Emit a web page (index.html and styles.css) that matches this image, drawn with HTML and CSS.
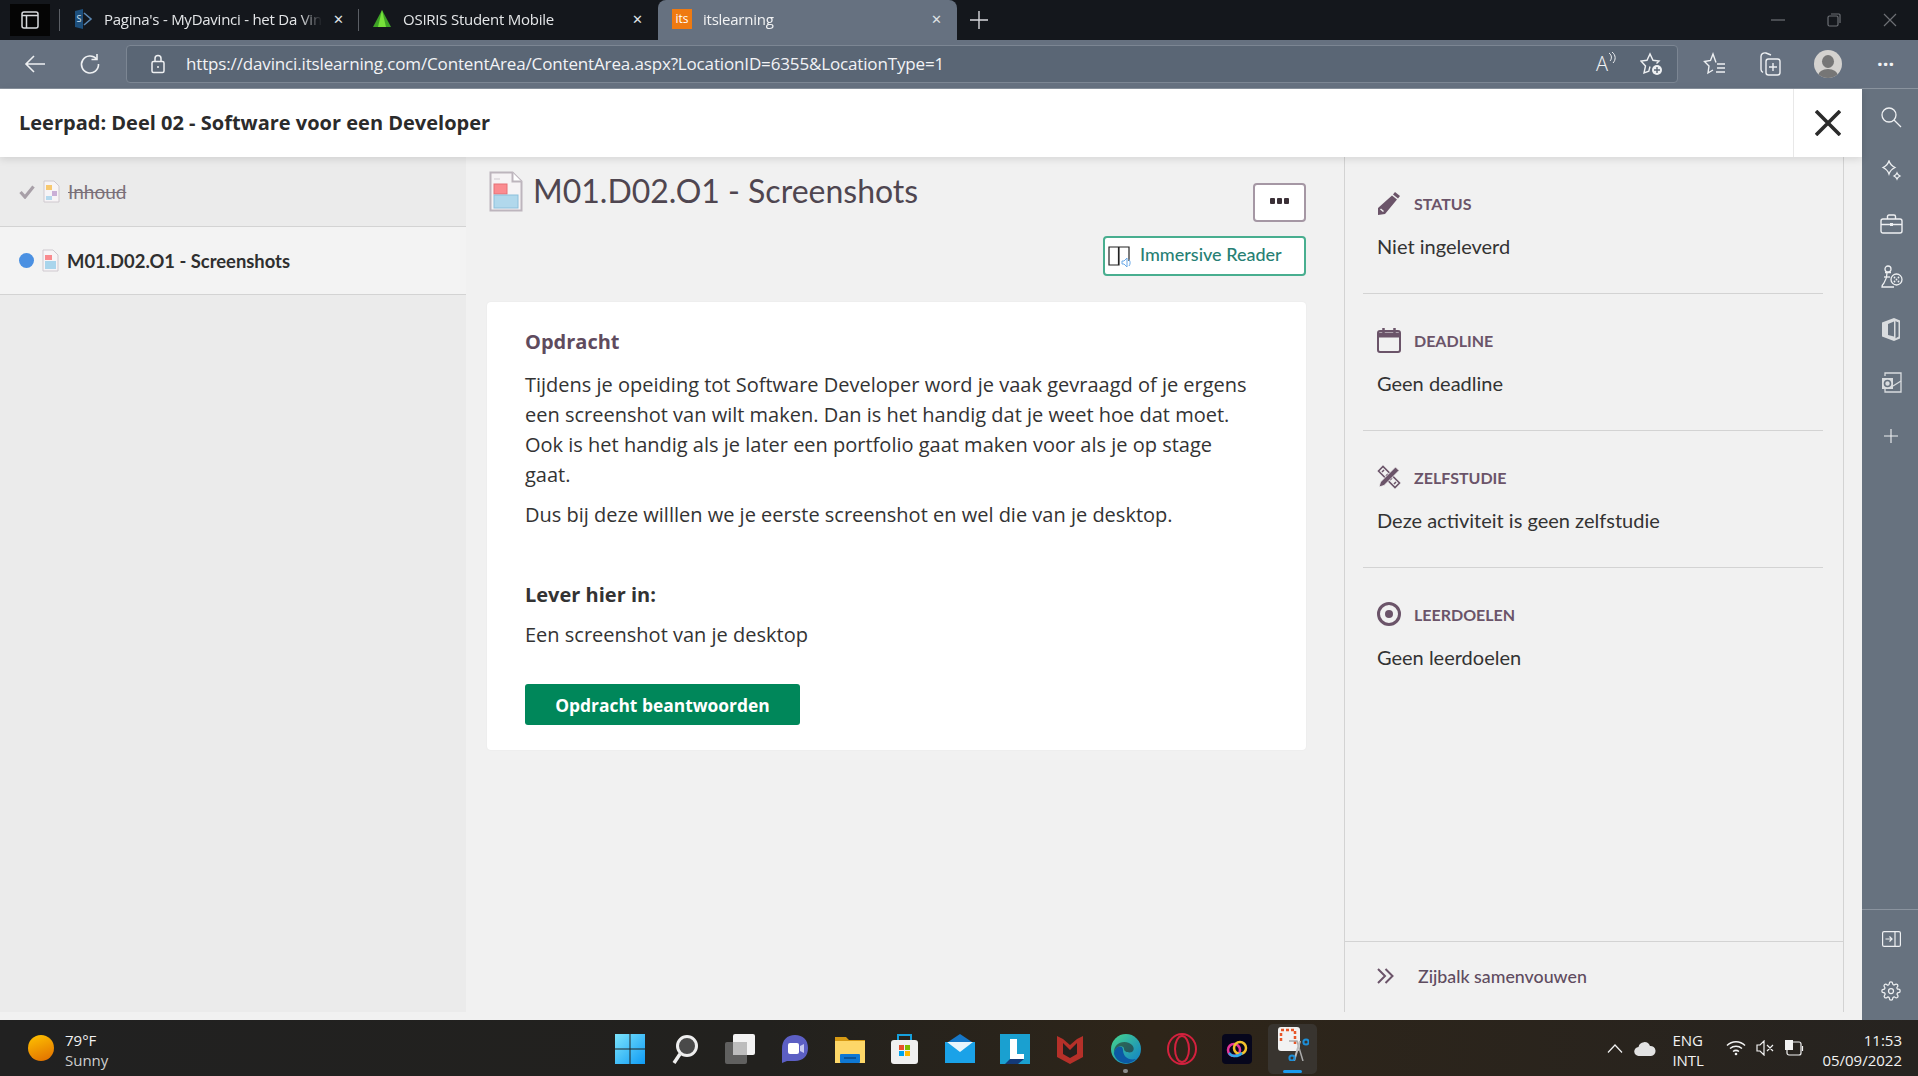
FILE: index.html
```html
<!DOCTYPE html>
<html lang="en">
<head>
    <meta charset="UTF-8">
    <title>itslearning</title>
    <link rel="stylesheet" href="styles.css">
</head>
<body>

<!-- Browser tabs -->
<div class="tabbar">
    <div class="tab-toggle">
        <svg width="18" height="18" viewBox="0 0 18 18" fill="none" stroke="#d8dadd" stroke-width="1.5"><rect x="1" y="1" width="16" height="16" rx="2"/><path d="M1 4.5h16M5.5 4.5V17"/></svg>
    </div>
    <div class="tab">
        <svg width="20" height="22" viewBox="0 0 20 22"><path d="M2 3l8-2v20l-8-2z" fill="#1d4f7c"/><path d="M11 5l7 6-7 6" fill="none" stroke="#5b87b2" stroke-width="1.6"/><text x="3.5" y="14" font-size="9" fill="#cfe0ee" font-family="Open Sans">S</text></svg>
        <span class="tab-label">Pagina's - MyDavinci - het Da Vinci</span>
        <span class="tab-close">✕</span>
    </div>
    <div class="tab">
        <svg width="20" height="20" viewBox="0 0 20 20"><path d="M10 1L19 18H1z" fill="#3fa326"/><path d="M10 1l-4 17h8z" fill="#77e23a"/></svg>
        <span class="tab-label">OSIRIS Student Mobile</span>
        <span class="tab-close">✕</span>
    </div>
    <div class="tab tab-active">
        <span class="its-logo">its</span>
        <span class="tab-label">itslearning</span>
        <span class="tab-close">✕</span>
    </div>
    <div class="tab-new">
        <svg width="18" height="18" viewBox="0 0 18 18" stroke="#d6d8db" stroke-width="1.4"><path d="M9 0v18M0 9h18"/></svg>
    </div>
    <div class="window-controls">
        <svg width="14" height="14" viewBox="0 0 14 14" stroke="#6d7075" stroke-width="1.2"><path d="M0 7h14"/></svg>
        <svg width="14" height="14" viewBox="0 0 14 14" fill="none" stroke="#6d7075" stroke-width="1.2"><rect x="1" y="3" width="10" height="10" rx="1.5"/><path d="M4 1h8a1 1 0 0 1 1 1v8"/></svg>
        <svg width="14" height="14" viewBox="0 0 14 14" stroke="#6d7075" stroke-width="1.2"><path d="M1 1l12 12M13 1L1 13"/></svg>
    </div>
</div>

<!-- Address bar -->
<div class="toolbar">
    <svg class="tb-back" width="22" height="20" viewBox="0 0 22 20" fill="none" stroke="#eef0f2" stroke-width="1.6"><path d="M21 10H2M10 2l-8 8 8 8"/></svg>
    <svg class="tb-reload" width="22" height="22" viewBox="0 0 22 22" fill="none" stroke="#eef0f2" stroke-width="1.6"><path d="M17.5 6A8.5 8.5 0 1 0 19.5 11"/><path d="M18 1v5.5h-5.5"/></svg>
    <div class="addressbar">
        <svg width="16" height="20" viewBox="0 0 16 20" fill="none" stroke="#eef0f2" stroke-width="1.5"><rect x="2" y="7.500" width="12" height="11" rx="1.5"/><path d="M5 7.500V4.500a3 3 0 0 1 6 0v3"/><circle cx="8" cy="13" r="1" fill="#eef0f2" stroke="none"/></svg>
        <span class="url">https://davinci.itslearning.com/ContentArea/ContentArea.aspx?LocationID=6355&amp;LocationType=1</span>
        <span class="read-aloud">A<svg width="8" height="14" viewBox="0 0 8 14" fill="none" stroke="#eef0f2" stroke-width="1"><path d="M1 1c3 2 3 6 1 8M4 0c4 3 4 8 1 11"/></svg></span>
        <svg class="addr-fav" width="24" height="24" viewBox="0 0 24 24" fill="none" stroke="#eef0f2" stroke-width="1.4"><path d="M10 14.500l-1.200 4.700L4 21l1.500-7L1 9l6-.7L10 2l3 6.300 6 .7-2.500 2.500"/><circle cx="17" cy="18" r="5" fill="#eef0f2" stroke="none"/><path d="M17 15v6M14 18h6" stroke="#5a6675"/></svg>
    </div>
    <svg class="tb-star" width="24" height="24" viewBox="0 0 24 24" fill="none" stroke="#eef0f2" stroke-width="1.4"><path d="M13 10.500L10 2 7.500 8.500 1.500 9.500l4.500 4.500L5 21l5-3"/><path d="M14 12h8M14 16h8M13 20h9"/></svg>
    <svg class="tb-collect" width="24" height="26" viewBox="0 0 24 26" fill="none" stroke="#eef0f2" stroke-width="1.4"><rect x="8" y="8" width="14" height="16" rx="2.5"/><path d="M13 4l-5-2C5 1.500 3 3 3 5.500v13c0 1 .5 2 2 3M15 12v8M11 16h8"/></svg>
    <span class="avatar"><span class="avatar-head"></span><span class="avatar-body"></span></span>
    <span class="tb-dots">···</span>
</div>

<div class="workspace">
    <div class="app">
        <!-- Learning path header -->
        <header class="path-header">
            <h1>Leerpad: Deel 02 - Software voor een Developer</h1>
            <div class="path-close">
                <svg width="26" height="26" viewBox="0 0 26 26" stroke="#2b2b2b" stroke-width="3.6"><path d="M1 1l24 24M25 1L1 25"/></svg>
            </div>
        </header>

        <div class="columns">
            <!-- Left list -->
            <nav class="path-list">
                <div class="path-item path-item-done">
                    <svg class="check" width="16" height="14" viewBox="0 0 16 14" fill="none" stroke="#a8a0a8" stroke-width="3.2"><path d="M1.500 7l4.500 5L14.500 1.500"/></svg>
                    <svg width="17" height="23" viewBox="0 0 17 23"><path d="M1 1h10l5 5v16H1z" fill="#f7f4f6" stroke="#cfc9cf"/><rect x="3" y="5" width="6" height="5" fill="#f7c870"/><rect x="9" y="11" width="5" height="5" fill="#c9aed6"/><rect x="3" y="16" width="6" height="4" fill="#b5d9ee"/></svg>
                    <span class="item-done">Inhoud</span>
                </div>
                <div class="path-item path-item-current">
                    <span class="dot"></span>
                    <svg width="17" height="23" viewBox="0 0 17 23"><path d="M1 1h10l5 5v16H1z" fill="#f7f4f6" stroke="#cfc9cf"/><rect x="3" y="6" width="7" height="5" fill="#f98a8e"/><rect x="3" y="12" width="11" height="8" fill="#a9d5ec"/></svg>
                    <span class="item-current">M01.D02.O1 - Screenshots</span>
                </div>
            </nav>

            <!-- Assignment -->
            <main class="content">
                <div class="content-head">
                    <div class="title-row">
                        <svg width="34" height="41" viewBox="0 0 34 41"><path d="M1.500 1.500h22l9 9v29h-31z" fill="#f6f3f5" stroke="#bdb5bd" stroke-width="2"/><path d="M23.500 1.500v9h9" fill="#fff" stroke="#bdb5bd" stroke-width="2"/><path d="M5 8h6" stroke="#cfc9cf"/><rect x="5" y="13" width="13" height="10" fill="#fb8b90" stroke="#e57176"/><rect x="5" y="24" width="24" height="13" fill="#b1d8ec" stroke="#8cc0dc"/></svg>
                        <h2>M01.D02.O1 - Screenshots</h2>
                    </div>
                    <div class="head-actions">
                        <button class="btn-more"><i></i><i></i><i></i></button>
                        <button class="btn-reader">
                            <svg width="24" height="24" viewBox="0 0 24 24" fill="none"><path d="M10.500 3H1v18h10V3h10v14M10.500 3v18" stroke="#222" stroke-width="1.200"/><path d="M14 17h2l3-3v9l-3-3h-2zM21 15.500c1.500 2 1.500 4.500 0 6.500" stroke="#6aa9e8" stroke-width="1" fill="#fff"/></svg>
                            <span>Immersive Reader</span>
                        </button>
                    </div>
                </div>

                <section class="card">
                    <h3>Opdracht</h3>
                    <p>Tijdens je opeiding tot Software Developer word je vaak gevraagd of je ergens een screenshot van wilt maken. Dan is het handig dat je weet hoe dat moet. Ook is het handig als je later een portfolio gaat maken voor als je op stage gaat.</p>
                    <p>Dus bij deze willlen we je eerste screenshot en wel die van je desktop.</p>
                    <h4>Lever hier in:</h4>
                    <p>Een screenshot van je desktop</p>
                    <button class="btn-answer">Opdracht beantwoorden</button>
                </section>
            </main>

            <!-- Info sidebar -->
            <aside class="info">
                <div class="info-list">
                    <div class="info-block">
                        <div class="info-label">
                            <svg width="24" height="24" viewBox="0 0 24 24" fill="#6b5469"><path d="M18 1l5 4-2 2.500-5-4zM15 4.500l5 4L8 23l-7 1 0-7z"/><path d="M3.500 18l3 2.500" stroke="#f1f1f1" stroke-width="1.500"/></svg>
                            <span>STATUS</span>
                        </div>
                        <div class="info-value">Niet ingeleverd</div>
                    </div>
                    <div class="info-block">
                        <div class="info-label">
                            <svg width="24" height="26" viewBox="0 0 24 26" fill="none" stroke="#6b5469" stroke-width="2"><rect x="1" y="4" width="22" height="21" rx="2"/><path d="M1 8h22" stroke-width="5"/><path d="M6.500 1v6M17.500 1v6" stroke-width="2.500"/></svg>
                            <span>DEADLINE</span>
                        </div>
                        <div class="info-value">Geen deadline</div>
                    </div>
                    <div class="info-block">
                        <div class="info-label">
                            <svg width="24" height="24" viewBox="0 0 24 24" fill="none" stroke="#6b5469" stroke-width="1.600"><path d="M1.500 6L6 1.500 22.500 18 18 22.500z" fill="#f1f1f1"/><path d="M5 7l2-2M9 11l2-2M13 15l2-2M17 19l2-2"/><path d="M18.500 2l3.500 3.500L7 20.500l-5 1.500 1.500-5z" fill="#6b5469" stroke="#f1f1f1" stroke-width=".8"/></svg>
                            <span>ZELFSTUDIE</span>
                        </div>
                        <div class="info-value">Deze activiteit is geen zelfstudie</div>
                    </div>
                    <div class="info-block info-block-last">
                        <div class="info-label">
                            <svg width="24" height="24" viewBox="0 0 24 24"><circle cx="12" cy="12" r="10.500" fill="none" stroke="#6b5469" stroke-width="3"/><circle cx="12" cy="12" r="4" fill="#6b5469"/></svg>
                            <span>LEERDOELEN</span>
                        </div>
                        <div class="info-value">Geen leerdoelen</div>
                    </div>
                </div>
                <div class="info-foot">
                    <svg width="18" height="18" viewBox="0 0 18 18" fill="none" stroke="#6b5469" stroke-width="2"><path d="M1 2l7 7-7 7M8.500 2l7 7-7 7"/></svg>
                    <span>Zijbalk samenvouwen</span>
                </div>
            </aside>
            <div class="gutter"></div>
        </div>
    </div>

    <!-- Edge sidebar -->
    <div class="rail">
        <div class="rail-top">
            <svg width="21" height="21" viewBox="0 0 21 21" fill="none" stroke="#eef0f2" stroke-width="1.3"><circle cx="8" cy="8" r="7"/><path d="M13 13l7 7"/></svg>
            <svg width="21" height="21" viewBox="0 0 21 21" fill="none" stroke="#eef0f2" stroke-width="1.3"><path d="M8 1c1 3 3 5 6 6.500-3 1.500-5 3.500-6 6.500-1-3-3-5-6-6.500C5 6 7 4 8 1z"/><path d="M16 13c.5 1.300 1.200 2 3 3-1.800 1-2.500 1.700-3 3-.5-1.300-1.200-2-3-3 1.800-1 2.500-1.700 3-3z"/></svg>
            <svg width="23" height="20" viewBox="0 0 23 20" fill="none" stroke="#eef0f2" stroke-width="1.400"><rect x="1" y="5" width="21" height="14" rx="2"/><path d="M7.500 5V2.500C7.500 1.500 8 1 9 1h5c1 0 1.500.5 1.500 1.500V5M1 10.500h21"/><rect x="10" y="9" width="3" height="3" fill="#eef0f2" stroke="none"/></svg>
            <svg width="23" height="23" viewBox="0 0 23 23" fill="none" stroke="#eef0f2" stroke-width="1.300"><circle cx="8" cy="4" r="3"/><path d="M5 7.500h6M7 8c0 4-1 7-3 10-1 1-2 2-2 4h12"/><path d="M4 12h6"/><circle cx="16.500" cy="14.500" r="5.500" fill="#67727f"/><circle cx="16.500" cy="14.500" r=".9" fill="#eef0f2" stroke="none"/><circle cx="14.500" cy="12.500" r=".9" fill="#eef0f2" stroke="none"/><circle cx="18.500" cy="12.500" r=".9" fill="#eef0f2" stroke="none"/><circle cx="14.500" cy="16.500" r=".9" fill="#eef0f2" stroke="none"/><circle cx="18.500" cy="16.500" r=".9" fill="#eef0f2" stroke="none"/></svg>
            <svg width="20" height="25" viewBox="0 0 20 25"><path d="M1 5.500L13 1l6 2.500v18L13 24 1 19.500z" fill="#d9dcdf"/><path d="M7 7l6-2.500v15L7 18z" fill="#67727f"/><path d="M14 3.500l4 1.500v15l-4 2z" fill="#67727f" stroke="#d9dcdf"/></svg>
            <svg width="21" height="21" viewBox="0 0 21 21" fill="none" stroke="#d9dcdf" stroke-width="1.300"><path d="M4 4V1h16v19H4v-3"/><path d="M20 9l-8 5"/><rect x="1" y="6" width="11" height="11" fill="#d9dcdf" stroke="none"/><circle cx="6.500" cy="11.500" r="3" stroke="#67727f" stroke-width="1.600"/></svg>
            <svg width="14" height="14" viewBox="0 0 14 14" stroke="#eef0f2" stroke-width="1.100"><path d="M7 0v14M0 7h14"/></svg>
        </div>
        <div class="rail-bottom">
            <svg width="19" height="16" viewBox="0 0 19 16" fill="none" stroke="#eef0f2" stroke-width="1.200"><rect x=".6" y=".6" width="17.800" height="14.800" rx="1.500"/><path d="M13 .6v14.800M3.500 8h6.500M7.500 5.500L10 8l-2.500 2.500"/></svg>
            <svg width="20" height="22" viewBox="0 0 24 24" fill="none" stroke="#eef0f2" stroke-width="1.500"><circle cx="12" cy="12" r="3"/><path d="M19.400 15a1.650 1.650 0 0 0 .33 1.820l.06.06a2 2 0 1 1-2.830 2.830l-.06-.06a1.650 1.650 0 0 0-2.800 1.170V21a2 2 0 0 1-4 0v-.09A1.650 1.650 0 0 0 7.300 19.700l-.06.06a2 2 0 1 1-2.830-2.830l.06-.06a1.650 1.650 0 0 0-1.170-2.800H3a2 2 0 0 1 0-4h.09A1.650 1.650 0 0 0 4.300 7.300l-.06-.06a2 2 0 1 1 2.830-2.830l.06.06a1.650 1.650 0 0 0 2.800-1.170V3a2 2 0 0 1 4 0v.09a1.650 1.650 0 0 0 2.800 1.170l.06-.06a2 2 0 1 1 2.830 2.830l-.06.06a1.650 1.650 0 0 0 1.170 2.800H21a2 2 0 0 1 0 4h-.09a1.650 1.650 0 0 0-1.510 1z"/></svg>
        </div>
    </div>
</div>

<!-- Windows taskbar -->
<footer class="taskbar">
    <div class="weather">
        <span class="sun"></span>
        <div class="weather-text">
            <span>79°F</span>
            <span class="weather-sub">Sunny</span>
        </div>
    </div>
    <div class="task-icons">
        <svg width="30" height="30" viewBox="0 0 30 30"><defs><linearGradient id="win" x1="0" y1="0" x2="1" y2="1"><stop offset="0" stop-color="#7ce4fb"/><stop offset="1" stop-color="#0f9bf5"/></linearGradient></defs><path d="M0 0h14.500v14.500H0zM15.500 0H30v14.500H15.500zM0 15.500h14.500V30H0zM15.500 15.500H30V30H15.500z" fill="url(#win)"/></svg>
        <svg width="30" height="30" viewBox="0 0 30 30"><circle cx="17" cy="12" r="9.500" fill="#4a4a4a" stroke="#eee" stroke-width="3"/><path d="M10 20L4 29" stroke="#eee" stroke-width="3.500"/></svg>
        <svg width="30" height="30" viewBox="0 0 30 30"><rect x="8" y="0" width="22" height="21" rx="2" fill="#f3f3f3"/><rect x="0" y="8" width="22" height="22" rx="2" fill="#6b6b6b" opacity=".85"/><rect x="8" y="8" width="14" height="13" fill="#bdbdbd"/></svg>
        <svg width="30" height="30" viewBox="0 0 30 30"><path d="M15 1C7 1 2 6 2 15v14l5-2h8c8 0 13-5 13-13S23 1 15 1z" fill="#5c5fc4"/><rect x="8" y="9" width="11" height="11" rx="2" fill="#fff"/><path d="M20 12l4-2v9l-4-2z" fill="#c6c8f0"/></svg>
        <svg width="30" height="30" viewBox="0 0 30 30"><path d="M0 3h11l3 3h16v4H0z" fill="#d79a14"/><path d="M0 7h30v22H0z" fill="#fdd768"/><rect x="5" y="20" width="20" height="9" rx="1" fill="#0f78d4"/><path d="M9 24h12" stroke="#0b4a87" stroke-width="1.500"/></svg>
        <svg width="30" height="30" viewBox="0 0 30 30"><path d="M8 6V1h13v5" fill="none" stroke="#16a0dc" stroke-width="2"/><rect x="1" y="6" width="27" height="24" rx="3" fill="#f0f0f0"/><rect x="9" y="11" width="5" height="5" fill="#e8502b"/><rect x="15" y="11" width="5" height="5" fill="#7fba00"/><rect x="9" y="17" width="5" height="5" fill="#00a4ef"/><rect x="15" y="17" width="5" height="5" fill="#ffb900"/></svg>
        <svg width="30" height="30" viewBox="0 0 30 30"><path d="M0 10L15 0l15 10v19H0z" fill="#1677c7"/><path d="M0 8h30v21H0z" fill="#1aa2e8"/><path d="M2 8h26L15 18z" fill="#e9f5fc"/></svg>
        <svg width="30" height="30" viewBox="0 0 30 30"><rect width="30" height="30" fill="#1aa0d0"/><path d="M10 5h7v15h7v5H10z" fill="#fff"/><path d="M10 25h14l-6 5H5z" fill="#143a78"/></svg>
        <svg width="30" height="30" viewBox="0 0 30 30"><path d="M2 2l6 3 7 6 7-6 6-3v21L15 30 2 23z" fill="#b53029"/><path d="M8 9l7 7 7-7v11l-7 4-7-4z" fill="#24201d"/></svg>
        <div class="task-running">
            <svg width="32" height="32" viewBox="0 0 32 32"><defs><linearGradient id="edge" x1="0" y1="0" x2="1" y2="1"><stop offset="0" stop-color="#47d68b"/><stop offset="1" stop-color="#0f7dc9"/></linearGradient></defs><circle cx="16" cy="16" r="15" fill="url(#edge)"/><path d="M4 21C3 11 12 7 19 10c5 2 6 7 3 9-3 1-8 0-8-3 0-5-10-3-10 5z" fill="#24201d" opacity=".55"/><path d="M13 17c0 6 5 11 13 9-7 7-19 5-22-5 0-8 9-10 9-4z" fill="#0c59a4"/></svg>
            <span class="task-dot"></span>
        </div>
        <svg width="30" height="32" viewBox="0 0 30 32" fill="none" stroke="#d3213e" stroke-width="2"><ellipse cx="15" cy="16" rx="14" ry="15"/><ellipse cx="15" cy="16" rx="7" ry="13"/></svg>
        <svg width="30" height="30" viewBox="0 0 30 30"><rect width="30" height="30" rx="4" fill="#06061c"/><circle cx="12" cy="16" r="6" fill="none" stroke="#e5359b" stroke-width="2.500"/><circle cx="18" cy="14" r="6" fill="none" stroke="#f4c32b" stroke-width="2.500"/><path d="M7 19c3 4 9 4 13 0" fill="none" stroke="#2fa7ea" stroke-width="2.500"/></svg>
        <div class="task-active">
            <svg width="32" height="34" viewBox="0 0 32 34"><rect x="1" y="0" width="22" height="24" rx="3" fill="#f2f2f2"/><path d="M4 3h14v14" fill="none" stroke="#e8572a" stroke-width="2.500" stroke-dasharray="3 2"/><path d="M4 6v9" stroke="#e8572a" stroke-width="2.500" stroke-dasharray="3 2"/><path d="M12 14h8l6 20" fill="none" stroke="#aaa" stroke-width="1.500"/><path d="M17 34l6-20" stroke="#bbb" stroke-width="2"/><circle cx="15" cy="31" r="2.600" fill="none" stroke="#1d8fd8" stroke-width="2"/><circle cx="29" cy="15" r="2.600" fill="none" stroke="#1d8fd8" stroke-width="2"/></svg>
            <span class="task-underline"></span>
        </div>
    </div>
    <div class="tray">
        <svg width="16" height="9" viewBox="0 0 16 9" fill="none" stroke="#f2f2f2" stroke-width="1.200"><path d="M1 8.500L8 1l7 7.500"/></svg>
        <svg class="tray-cloud" width="22" height="15" viewBox="0 0 22 15" fill="#e2e2e2"><path d="M5 15a4.500 4.500 0 0 1-.5-9A6 6 0 0 1 16 5a5 5 0 0 1 1 10z"/></svg>
        <div class="tray-lang"><span>ENG</span><span>INTL</span></div>
        <div class="tray-status">
            <svg width="20" height="16" viewBox="0 0 20 16" fill="none" stroke="#f2f2f2" stroke-width="1.500"><path d="M1 5.500c5-5 13-5 18 0M4 8.500c3.500-3 8.500-3 12 0M7 11.500c2-1.500 4-1.500 6 0"/><circle cx="10" cy="14" r="1.300" fill="#f2f2f2" stroke="none"/></svg>
            <svg width="18" height="16" viewBox="0 0 18 16" fill="none" stroke="#f2f2f2" stroke-width="1.200"><path d="M1 5h3l4-4v14l-4-4H1zM11 5l6 6M17 5l-6 6"/></svg>
            <svg width="20" height="18" viewBox="0 0 20 18" fill="none" stroke="#f2f2f2" stroke-width="1.200"><rect x="3" y="3" width="14" height="13" rx="2"/><rect x="1" y="1" width="8" height="10" fill="#f2f2f2" stroke="none"/><path d="M18.500 7v5"/></svg>
        </div>
        <div class="clock"><span>11:53</span><span>05/09/2022</span></div>
    </div>
</footer>
</body>
</html>
```

FILE: styles.css
```css
* { box-sizing: border-box; }
html, body { height: 100%; }
body {
    margin: 0;
    height: 100vh;
    overflow: hidden;
    display: flex;
    flex-direction: column;
    font-family: 'Open Sans', 'Noto Sans', sans-serif;
    color: #333;
    background: #f1f1f1;
}
svg { flex: none; display: block; }

/* tabs */
.tabbar {
    height: 40px;
    flex: none;
    display: flex;
    align-items: center;
    background: #14171c;
    color: #e4e6e8;
    font-size: 15px;
}
.tab-toggle {
    width: 50px;
    height: 32px;
    margin-left: 10px;
    display: flex;
    align-items: center;
    padding-left: 11px;
    background: linear-gradient(to right, #050505 0, #050505 40px, #14171c 40px);
}
.tab {
    width: 299px;
    height: 40px;
    display: flex;
    align-items: center;
    gap: 11px;
    padding: 0 15px 2px 13px;
    position: relative;
}
.tab::before {
    content: "";
    position: absolute;
    left: -1px;
    top: 9px;
    bottom: 9px;
    width: 1px;
    background: #5b5f65;
}
.tab-label {
    flex: 1;
    overflow: hidden;
    white-space: nowrap;
    letter-spacing: -0.25px;
    -webkit-mask-image: linear-gradient(to right, #000 90%, transparent);
}
.tab-close { font-size: 13px; color: #dfe1e4; }
.tab-active {
    background: #667180;
    border-radius: 8px 8px 0 0;
    padding-left: 14px;
    color: #f2f3f4;
}
.tab-active::before { display: none; }
.its-logo {
    width: 20px;
    height: 20px;
    flex: none;
    background: #ef7a11;
    color: #fff;
    font-size: 12px;
    line-height: 20px;
    text-align: center;
}
.tab-new { margin-left: 13px; }
.window-controls {
    margin-left: auto;
    display: flex;
    gap: 42px;
    padding-right: 21px;
}

/* toolbar */
.toolbar {
    height: 49px;
    flex: none;
    display: flex;
    align-items: center;
    background: #667180;
    border-bottom: 1px solid #8a939e;
    padding-bottom: 1px;
}
.tb-back { margin-left: 24px; }
.tb-reload { margin-left: 33px; }
.addressbar {
    width: 1552px;
    height: 38px;
    margin-left: 25px;
    display: flex;
    align-items: center;
    background: #5a6675;
    border: 1px solid #7c8693;
    border-radius: 4px;
    padding: 0 13px 0 23px;
    color: #f2f3f5;
}
.url {
    margin-left: 20px;
    font-size: 17px;
    letter-spacing: -0.15px;
    white-space: nowrap;
}
.read-aloud {
    margin-left: auto;
    display: flex;
    font-size: 20px;
    line-height: 24px;
    font-weight: 300;
}
.addr-fav { margin-left: 24px; }
.tb-star { margin-left: 25px; }
.tb-collect { margin-left: 31px; }
.avatar {
    width: 28px;
    height: 28px;
    margin-left: 32px;
    border-radius: 50%;
    background: #d4d2cf;
    position: relative;
    overflow: hidden;
}
.avatar-head {
    position: absolute;
    left: 8px;
    top: 5px;
    width: 12px;
    height: 13px;
    border-radius: 50%;
    background: #767676;
}
.avatar-body {
    position: absolute;
    left: 4px;
    top: 19px;
    width: 20px;
    height: 14px;
    border-radius: 50%;
    background: #767676;
}
.tb-dots {
    margin-left: 35px;
    font-size: 20px;
    font-weight: 700;
    line-height: 20px;
    color: #f2f3f5;
}

/* page */
.workspace {
    flex: 1;
    min-height: 0;
    display: flex;
}
.app {
    flex: 1;
    min-width: 0;
    display: flex;
    flex-direction: column;
}
.path-header {
    height: 68px;
    flex: none;
    display: flex;
    align-items: center;
    justify-content: space-between;
    background: #fff;
    box-shadow: 0 2px 8px rgba(0,0,0,0.12);
    position: relative;
    padding-left: 19px;
}
.path-header h1 {
    margin: 0 0 2px;
    font-size: 20px;
    font-weight: 700;
    color: #2b2b2b;
}
.path-close {
    width: 69px;
    height: 68px;
    border-left: 1px solid #e8e8e8;
    display: flex;
    align-items: center;
    justify-content: center;
}
.columns {
    flex: 1;
    min-height: 0;
    display: flex;
}
.path-list {
    width: 466px;
    flex: none;
    background: #ebebeb;
    margin-bottom: 8px;
}
.path-item {
    height: 68px;
    display: flex;
    align-items: center;
    padding-left: 19px;
    gap: 8px;
    border-bottom: 1px solid #d3d3d3;
}
.path-item-done { height: 70px; }
.path-item-current { background: #f3f3f3; }
.item-done {
    font-family: 'Lato', sans-serif;
    font-size: 19px;
    color: #7a7079;
    text-decoration: line-through;
}
.item-current {
    font-family: 'Lato', sans-serif;
    font-size: 18.4px;
    font-weight: 700;
    color: #2f2f2f;
}
.dot {
    width: 15px;
    height: 15px;
    border-radius: 50%;
    background: #4a90e2;
}
.content {
    width: 878px;
    flex: none;
    padding: 14px 38px 0 21px;
}
.content-head {
    display: flex;
    justify-content: space-between;
    height: 131px;
}
.title-row {
    display: flex;
    align-items: flex-start;
    gap: 10px;
    margin-left: 2px;
}
.title-row h2 {
    margin: 0;
    font-family: 'Lato', sans-serif;
    font-size: 32px;
    font-weight: 400;
    color: #4f4650;
}
.head-actions {
    display: flex;
    flex-direction: column;
    align-items: flex-end;
    gap: 14px;
    padding-top: 12px;
}
.btn-more {
    width: 53px;
    height: 39px;
    background: #fff;
    border: 2px solid #a597a4;
    border-radius: 4px;
    display: flex;
    align-items: center;
    justify-content: center;
    gap: 2px;
    padding: 0 0 3px;
}
.btn-more i {
    width: 5px;
    height: 6px;
    background: #3b3037;
    border-radius: 1px;
}
.btn-reader {
    width: 203px;
    height: 40px;
    background: #fff;
    border: 2px solid #48ae8f;
    border-radius: 4px;
    display: flex;
    align-items: center;
    gap: 8px;
    padding: 0 0 0 3px;
    font-family: 'Lato', sans-serif;
    font-size: 18px;
    font-weight: 500;
    color: #277f74;
}
.btn-reader span { margin-top: -5px; }
.card {
    background: #fff;
    border-radius: 4px;
    box-shadow: 0 0 2px rgba(0,0,0,0.06);
    height: 448px;
    padding: 26px 52px 0 38px;
}
.card h3 {
    margin: 0 0 15px;
    font-size: 20px;
    line-height: 27px;
    font-weight: 700;
    color: #5f4b5e;
}
.card p {
    margin: 0 0 10px;
    font-size: 20px;
    line-height: 30px;
    color: #333;
}
.card h4 {
    margin: 50px 0 10px;
    font-size: 20px;
    line-height: 30px;
    font-weight: 700;
    color: #333;
}
.btn-answer {
    display: block;
    width: 275px;
    height: 41px;
    margin-top: 34px;
    background: #00875a;
    border: none;
    border-radius: 3px;
    color: #fff;
    font-family: 'Open Sans', sans-serif;
    font-size: 17.4px;
    font-weight: 700;
}
.info {
    width: 500px;
    flex: none;
    margin-bottom: 8px;
    display: flex;
    flex-direction: column;
    border-left: 1px solid #d3d3d3;
    border-right: 1px solid #d3d3d3;
    font-family: 'Lato', sans-serif;
}
.info-list {
    flex: 1;
    padding: 0 20px 0 18px;
}
.info-block {
    height: 137px;
    padding: 33px 0 0 14px;
    border-bottom: 1px solid #d3d3d3;
}
.info-block-last { border-bottom: none; }
.info-label {
    display: flex;
    align-items: center;
    gap: 13px;
    height: 26px;
    font-size: 16px;
    font-weight: 700;
    color: #6b5469;
}
.info-value {
    margin-top: 15px;
    font-size: 20px;
    line-height: 30px;
    color: #333;
}
.info-foot {
    height: 71px;
    flex: none;
    border-top: 1px solid #d3d3d3;
    display: flex;
    align-items: center;
    gap: 23px;
    padding: 0 0 2px 32px;
    font-size: 17.8px;
    font-weight: 500;
    color: #5f4c60;
}
.gutter { flex: 1; }

/* edge sidebar */
.rail {
    width: 56px;
    flex: none;
    display: flex;
    flex-direction: column;
    justify-content: space-between;
    align-items: center;
    background: #67727f;
    padding: 2px 0 18px;
}
.rail-top {
    display: grid;
    grid-auto-rows: 53px;
    justify-items: center;
    align-items: center;
    padding-left: 2px;
}
.rail-bottom {
    width: 100%;
    display: flex;
    flex-direction: column;
    align-items: center;
    gap: 33px;
    border-top: 1px solid #8a939e;
    padding: 21px 0 0 2px;
}

/* taskbar */
.taskbar {
    height: 56px;
    flex: none;
    display: grid;
    grid-template-columns: 1fr auto 1fr;
    align-items: center;
    background: linear-gradient(to right, #212121 0, #22211e 40%, #2e2519 60%, #262320 100%);
    color: #f2f2f2;
    font-size: 15px;
    line-height: 20px;
}
.weather {
    display: flex;
    align-items: center;
    gap: 11px;
    padding-left: 28px;
}
.sun {
    width: 26px;
    height: 26px;
    border-radius: 50%;
    background: linear-gradient(160deg, #ffc400, #e06c00);
}
.weather-text {
    display: flex;
    flex-direction: column;
    padding-top: 3px;
}
.weather-sub { color: #cfcfcf; }
.task-icons {
    display: flex;
    align-items: center;
    gap: 25px;
    padding: 2px 0 0 14px;
}
.task-running { position: relative; }
.task-dot {
    position: absolute;
    left: 13px;
    top: 36px;
    width: 5px;
    height: 4px;
    border-radius: 2px;
    background: #8c8c8c;
}
.task-active {
    width: 49px;
    height: 50px;
    margin-left: -9px;
    display: flex;
    justify-content: center;
    padding-top: 3px;
    background: #38342f;
    border-radius: 5px;
    position: relative;
}
.task-underline {
    position: absolute;
    left: 15px;
    bottom: 1px;
    width: 19px;
    height: 3px;
    border-radius: 2px;
    background: #1a9cf0;
}
.tray {
    display: flex;
    align-items: center;
    justify-content: flex-end;
    padding-right: 16px;
}
.tray-cloud { margin-left: 11px; }
.tray-lang {
    display: flex;
    flex-direction: column;
    margin-left: 16px;
    width: 46px;
    padding-top: 3px;
}
.tray-status {
    display: flex;
    align-items: center;
    gap: 10px;
    margin-left: 8px;
}
.clock {
    display: flex;
    flex-direction: column;
    align-items: flex-end;
    margin-left: 18px;
    padding-top: 3px;
}
```
